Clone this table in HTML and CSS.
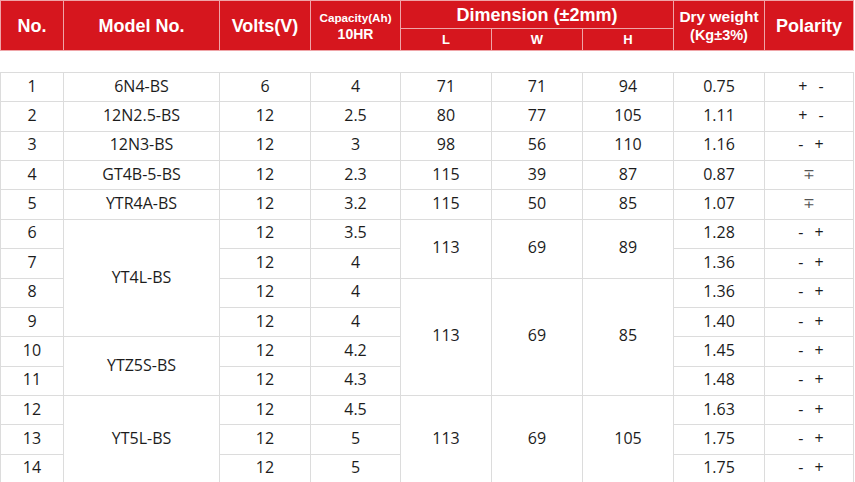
FILE: index.html
```html
<!DOCTYPE html>
<html lang="en">
<head>
<meta charset="utf-8">
<title>Battery specifications</title>
<link rel="stylesheet" href="styles.css">
</head>
<body>
<div class="sheet">
  <table class="spec head">
    <colgroup>
      <col class="c-no"><col class="c-model"><col class="c-volts"><col class="c-cap"><col class="c-dim"><col class="c-dim"><col class="c-dim"><col class="c-dw"><col class="c-pol">
    </colgroup>
    <thead>
      <tr class="hr1">
        <th rowspan="2" class="h-lg">No.</th>
        <th rowspan="2" class="h-lg">Model No.</th>
        <th rowspan="2" class="h-lg">Volts(V)</th>
        <th rowspan="2" class="h-cap"><span class="cap1">Capacity(Ah)</span><span class="cap2">10HR</span></th>
        <th colspan="3" class="h-lg h-dim">Dimension (±2mm)</th>
        <th rowspan="2" class="h-dw"><span class="dw1">Dry weight</span><span class="dw2">(Kg±3%)</span></th>
        <th rowspan="2" class="h-lg">Polarity</th>
      </tr>
      <tr class="hr2">
        <th class="h-sm">L</th>
        <th class="h-sm">W</th>
        <th class="h-sm">H</th>
      </tr>
    </thead>
  </table>

  <table class="spec body">
    <colgroup>
      <col class="c-no"><col class="c-model"><col class="c-volts"><col class="c-cap"><col class="c-dim"><col class="c-dim"><col class="c-dim"><col class="c-dw"><col class="c-pol">
    </colgroup>
    <tbody>
      <tr><td>1</td><td>6N4-BS</td><td>6</td><td>4</td><td>71</td><td>71</td><td>94</td><td>0.75</td><td class="pol">+ -</td></tr>
      <tr><td>2</td><td>12N2.5-BS</td><td>12</td><td>2.5</td><td>80</td><td>77</td><td>105</td><td>1.11</td><td class="pol">+ -</td></tr>
      <tr><td>3</td><td>12N3-BS</td><td>12</td><td>3</td><td>98</td><td>56</td><td>110</td><td>1.16</td><td class="pol">- +</td></tr>
      <tr><td>4</td><td>GT4B-5-BS</td><td>12</td><td>2.3</td><td>115</td><td>39</td><td>87</td><td>0.87</td><td class="pol pol-mp">∓</td></tr>
      <tr><td>5</td><td>YTR4A-BS</td><td>12</td><td>3.2</td><td>115</td><td>50</td><td>85</td><td>1.07</td><td class="pol pol-mp">∓</td></tr>
      <tr><td>6</td><td rowspan="4">YT4L-BS</td><td>12</td><td>3.5</td><td rowspan="2">113</td><td rowspan="2">69</td><td rowspan="2">89</td><td>1.28</td><td class="pol">- +</td></tr>
      <tr><td>7</td><td>12</td><td>4</td><td>1.36</td><td class="pol">- +</td></tr>
      <tr><td>8</td><td>12</td><td>4</td><td rowspan="4">113</td><td rowspan="4">69</td><td rowspan="4">85</td><td>1.36</td><td class="pol">- +</td></tr>
      <tr><td>9</td><td>12</td><td>4</td><td>1.40</td><td class="pol">- +</td></tr>
      <tr><td>10</td><td rowspan="2">YTZ5S-BS</td><td>12</td><td>4.2</td><td>1.45</td><td class="pol">- +</td></tr>
      <tr><td>11</td><td>12</td><td>4.3</td><td>1.48</td><td class="pol">- +</td></tr>
      <tr><td>12</td><td rowspan="3">YT5L-BS</td><td>12</td><td>4.5</td><td rowspan="3">113</td><td rowspan="3">69</td><td rowspan="3">105</td><td>1.63</td><td class="pol">- +</td></tr>
      <tr><td>13</td><td>12</td><td>5</td><td>1.75</td><td class="pol">- +</td></tr>
      <tr><td>14</td><td>12</td><td>5</td><td>1.75</td><td class="pol">- +</td></tr>
    </tbody>
  </table>
</div>
</body>
</html>
```
FILE: styles.css
```css
html, body {
  margin: 0;
  padding: 0;
  background: #ffffff;
}

.sheet {
  width: 855px;
  overflow: hidden;
}

.spec {
  border-collapse: collapse;
  table-layout: fixed;
  width: 854px;
}

.c-no { width: 63px; }
.c-model { width: 156px; }
.c-volts { width: 91px; }
.c-cap { width: 90px; }
.c-dim { width: 91px; }
.c-dw { width: 91px; }
.c-pol { width: 89px; }

/* header */
.head th {
  background: #d6161e;
  color: #ffffff;
  border: 1px solid #efa5a8;
  font-family: "Liberation Sans", Arial, sans-serif;
  font-weight: bold;
  text-align: center;
  vertical-align: middle;
  padding: 0;
}

.head .hr1 { height: 28px; }
.head .hr2 { height: 22px; }

.h-lg {
  font-size: 18px;
  line-height: 20px;
}

.h-dim {
  padding-bottom: 2px;
}

.h-sm {
  font-size: 13px;
  line-height: 16px;
  padding-top: 3px;
}

.h-cap span,
.h-dw span {
  display: block;
}

.cap1 {
  font-size: 11.7px;
  line-height: 17px;
}

.cap2 {
  font-size: 14px;
  line-height: 17px;
}

.dw1 {
  font-size: 15.5px;
  line-height: 19px;
}

.dw2 {
  font-size: 14.5px;
  line-height: 19px;
}

/* body */
.body {
  margin-top: 21px;
}

.body tr {
  height: 29.36px;
}

.body td {
  border: 1px solid #dcdcdc;
  font-family: "Open Sans", "Noto Sans", sans-serif;
  font-size: 16px;
  color: #1c1c1c;
  text-align: center;
  vertical-align: middle;
  padding: 0 0 3px 0;
  line-height: 20px;
}

.body td.pol {
  word-spacing: 7px;
  padding-left: 4px;
}

.body td.pol-mp {
  font-family: "DejaVu Sans", sans-serif;
  font-size: 14px;
  color: #555555;
  padding-left: 0;
}
```
